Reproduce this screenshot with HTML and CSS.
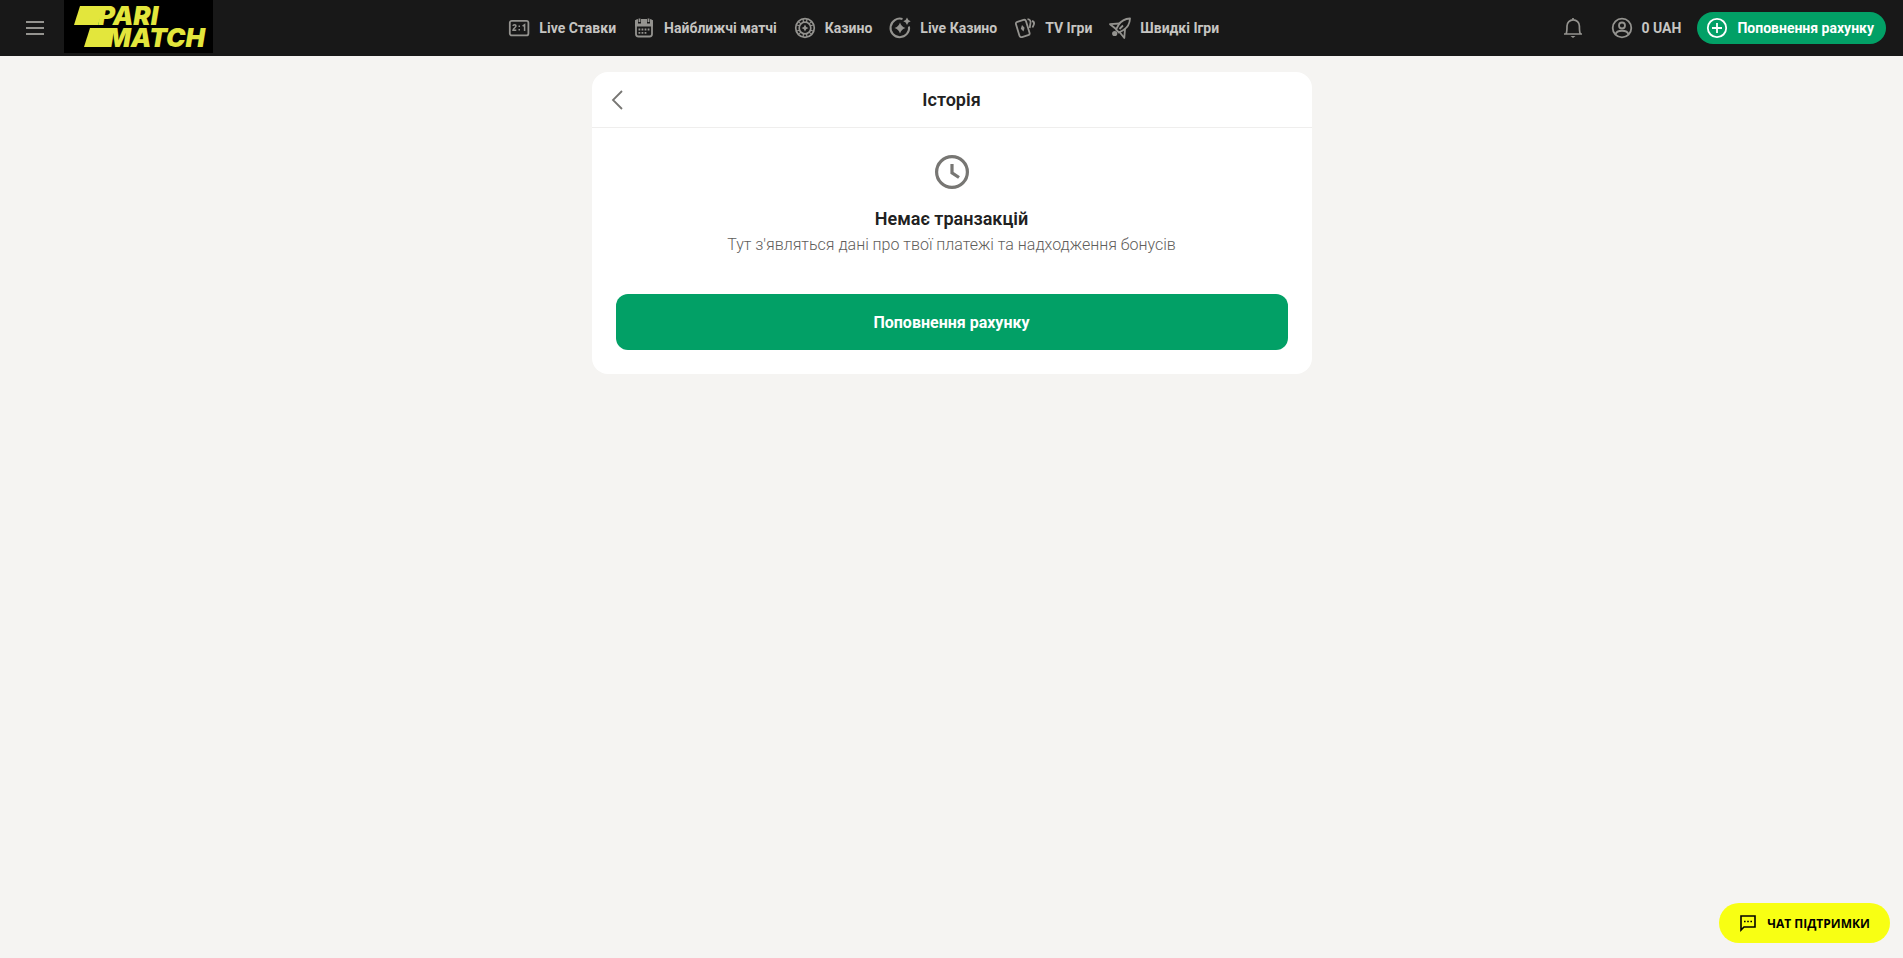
FILE: index.html
```html
<!DOCTYPE html>
<html lang="uk">
<head>
  <meta charset="UTF-8">
  <meta name="viewport" content="width=device-width, initial-scale=1.0">
  <title>Історія</title>
  <link rel="stylesheet" href="styles.css">
</head>
<body>

  <header class="header">
    <div class="header-left">
      <button class="icon-btn" type="button" aria-label="Меню">
        <svg width="24" height="24" viewBox="0 0 24 24" fill="none" stroke="currentColor" stroke-width="2">
          <path d="M3 6h18M3 12h18M3 18h18"/>
        </svg>
      </button>
      <a class="logo" href="#">
        <svg class="logo-shape" width="149" height="53" viewBox="0 0 149 53" fill="currentColor">
          <path d="M16 6H40L34 25H10z"/>
          <path d="M26 28H49L43 47H20z"/>
        </svg>
        PARI MATCH
      </a>
    </div>

    <nav class="nav">
      <a href="#">
        <svg width="24" height="24" viewBox="0 0 24 24" fill="none" stroke="currentColor" stroke-width="1.8">
          <rect x="2.8" y="4.8" width="18.6" height="14.6" rx="2"/>
          <path d="M6 10c.2-1.600 3-1.600 3 0 0 1.400-2.800 2.200-3 4.300h3.300M15.600 10.200l2-1.500v6.200" stroke-width="1.500"/>
          <path d="M11.500 9.500h1.500v1.500h-1.500zM11.500 13h1.500v1.500h-1.500z" fill="currentColor" stroke="none"/>
        </svg>
        Live Ставки
      </a>
      <a href="#">
        <svg width="24" height="24" viewBox="0 0 24 24" fill="none" stroke="currentColor" stroke-width="1.8">
          <rect x="4" y="4" width="16" height="16.500" rx="2.500"/>
          <path d="M4 5h16v4.500H4z" fill="currentColor"/>
          <path d="M7.500 2v5.500M16.500 2v5.500" stroke="#181818" stroke-width="3"/>
          <path d="M7.500 2.500v3.500M16.500 2.500v3.500"/>
          <path d="M6.500 13.500h11M6.500 16.800h8.500" stroke-dasharray="1.800 1.250" stroke-width="1.800"/>
        </svg>
        Найближчі матчі
      </a>
      <a href="#">
        <svg width="24" height="24" viewBox="0 0 24 24" fill="none" stroke="currentColor" stroke-width="1.7">
          <circle cx="12" cy="12" r="9.300"/>
          <circle cx="12" cy="12" r="5.800"/>
          <path d="M10 3l.5 3.400M14 3l-.5 3.400M10 21l.5-3.400M14 21l-.5-3.400M3.300 8.800l3.600 1.200M5.200 5.600l2.900 2.300M20.700 8.800l-3.600 1.200M18.800 5.600l-2.900 2.300M3.300 15.200l3.600-1.200M5.200 18.400l2.900-2.300M20.700 15.200l-3.600-1.200M18.800 18.400l-2.900-2.300" stroke-width="1.200"/>
          <path d="M12 8.500q.6 2.900 3.500 3.500-2.900.6-3.500 3.500-.6-2.900-3.500-3.500 2.900-.6 3.500-3.500z" fill="currentColor" stroke="none"/>
        </svg>
        Казино
      </a>
      <a href="#">
        <svg width="24" height="24" viewBox="0 0 24 24" fill="none" stroke="currentColor" stroke-width="2">
          <path d="M14.500 3A9.300 9.300 0 1 0 21 10.500"/>
          <path d="M12 6.500q1.400 4.100 5.500 5.500-4.100 1.400-5.500 5.500-1.400-4.100-5.500-5.500 4.100-1.400 5.500-5.500z" fill="currentColor" stroke="none"/>
          <path d="M19 1.500q.8 2.900 3.700 3.700-2.900.8-3.700 3.700-.8-2.900-3.700-3.700 2.900-.8 3.700-3.700z" fill="currentColor" stroke="none"/>
        </svg>
        Live Казино
      </a>
      <a href="#">
        <svg width="24" height="24" viewBox="0 0 24 24" fill="none" stroke="currentColor" stroke-width="1.8">
          <rect x="4.500" y="4.500" width="10.500" height="16" rx="2" transform="rotate(-17 9.750 12.500)"/>
          <path d="M9 9l2.600 2.700-1.100 3.800-2.700-2.700z" fill="currentColor" stroke="none"/>
          <path d="M14.500 3.200q3.400.3 3 3.500l-.8 5.300M19 4.800q2.800 1 1.900 3.600l-1.400 3.100"/>
        </svg>
        TV Ігри
      </a>
      <a href="#">
        <svg width="24" height="24" viewBox="0 0 24 24" fill="none" stroke="currentColor" stroke-width="1.8" stroke-linejoin="round">
          <path d="M22 2.500c-5 .2-9 2.500-11.500 6.500L8 13.500l3 3 4.500-2.500c4-2.500 6.300-6.500 6.500-11.500z"/>
          <path d="M11.500 7.500L2 8.200l6 4.800M17 13l-.7 9-4.800-6M15 9.500l-3.500 3.500"/>
          <circle cx="6.700" cy="17.500" r="2.600" fill="currentColor" stroke="none"/>
        </svg>
        Швидкі Ігри
      </a>
    </nav>

    <div class="header-right">
      <button class="icon-btn" type="button" aria-label="Сповіщення">
        <svg width="24" height="24" viewBox="0 0 24 24" fill="none" stroke="currentColor" stroke-width="1.7">
          <path d="M3 18h18M5 18c1-1.500 1-3 1-8a6.200 6.200 0 0 1 12.400 0c0 5 0 6.500 1 8M12 2v2"/>
          <path d="M9.500 20h5l-2.500 2z" fill="currentColor" stroke="none"/>
        </svg>
      </button>
      <a class="balance" href="#">
        <svg width="24" height="24" viewBox="0 0 24 24" fill="none" stroke="currentColor" stroke-width="1.800">
          <circle cx="12" cy="12" r="9.300"/>
          <circle cx="12" cy="9.500" r="3"/>
          <path d="M5.500 18.500c1.200-5 11.800-5 13 0"/>
        </svg>
        0 UAH
      </a>
      <button class="deposit-btn" type="button">
        <svg width="24" height="24" viewBox="0 0 24 24" fill="none" stroke="currentColor" stroke-width="1.800">
          <circle cx="12" cy="12" r="9.200"/>
          <path d="M12 7v10M7 12h10"/>
        </svg>
        Поповнення рахунку
      </button>
    </div>
  </header>

  <main class="card">
    <div class="card-header">
      <button class="back-btn" type="button" aria-label="Назад">
        <svg width="24" height="24" viewBox="0 0 24 24" fill="none" stroke="currentColor" stroke-width="1.800">
          <path d="M16 3L7 12l9 9"/>
        </svg>
      </button>
      <h1>Історія</h1>
    </div>
    <div class="card-body">
      <svg class="clock" width="40" height="40" viewBox="0 0 40 40" fill="none" stroke="currentColor" stroke-width="3.200">
        <circle cx="20" cy="20" r="15.400"/>
        <path d="M20 12v8.800l7 4.700"/>
      </svg>
      <h2>Немає транзакцій</h2>
      <p>Тут з'являться дані про твої платежі та надходження бонусів</p>
      <button class="main-btn" type="button">Поповнення рахунку</button>
    </div>
  </main>

  <button class="chat-btn" type="button">
    <svg width="18" height="18" viewBox="0 0 18 18" fill="none" stroke="currentColor" stroke-width="1.600">
      <path d="M2 2h14v11H5l-3 3z"/>
      <path d="M5 7.500h8" stroke-dasharray="1.600 1.600"/>
    </svg>
    ЧАТ ПІДТРИМКИ
  </button>

</body>
</html>
```

FILE: styles.css
```css
* {
  margin: 0;
  padding: 0;
  box-sizing: border-box;
}

body {
  font-family: Roboto, 'Liberation Sans', sans-serif;
  background: #f5f4f2;
  color: #212121;
  min-height: 100vh;
}

button {
  font-family: inherit;
  background: none;
  border: none;
  color: inherit;
  cursor: pointer;
}

a {
  color: inherit;
  text-decoration: none;
}

svg {
  display: block;
  flex-shrink: 0;
}

.header {
  display: flex;
  justify-content: space-between;
  height: 56px;
  padding: 0 17px 0 16px;
  background: #181818;
  color: #c6c5c2;
  font-size: 14px;
  font-weight: 700;
  white-space: nowrap;
}

.header svg {
  color: #94938f;
}

.header-left {
  display: flex;
  align-items: flex-start;
  gap: 10px;
}

.icon-btn {
  display: flex;
  align-items: center;
  height: 56px;
  padding: 0 7px;
}

/* the two words wrap onto separate lines, the first one hangs to the left */
.logo {
  position: relative;
  width: 149px;
  height: 53px;
  padding: 5px 0 0 42px;
  background: #000;
  color: #e3e63c;
  font-family: Inter, Roboto, sans-serif;
  font-size: 26px;
  line-height: 22px;
  font-weight: 900;
  font-style: italic;
  text-indent: -8px;
  white-space: normal;
}

.header .logo-shape {
  position: absolute;
  top: 0;
  left: 0;
  color: #e3e63c;
}

.nav {
  display: flex;
  align-items: center;
  gap: 16px;
}

.nav a,
.balance {
  display: flex;
  align-items: center;
  gap: 8px;
}

.header-right {
  display: flex;
  align-items: center;
  gap: 16px;
  padding-left: 38px;
}

.header-right .icon-btn {
  padding: 0 9px;
}

.deposit-btn {
  display: flex;
  align-items: center;
  gap: 8px;
  height: 32px;
  padding: 0 12px 0 8px;
  border-radius: 16px;
  background: #02a066;
  color: #fff;
  font-size: 14px;
  font-weight: 700;
}

.deposit-btn svg {
  color: #fff;
}

.card {
  max-width: 720px;
  margin: 16px auto 0;
  border-radius: 16px;
  background: #fff;
  text-align: center;
}

.card-header {
  display: grid;
  grid-template-columns: 24px 1fr 24px;
  align-items: center;
  height: 56px;
  padding: 0 14px;
  border-bottom: 1px solid #efeeed;
}

.back-btn {
  color: #777673;
}

.card h1 {
  font-size: 18px;
  line-height: 24px;
  font-weight: 600;
}

.card-body {
  display: flex;
  flex-direction: column;
  align-items: center;
  padding: 24px;
}

.clock {
  color: #777673;
}

.card h2 {
  margin-top: 15px;
  font-size: 18px;
  line-height: 24px;
  font-weight: 600;
}

.card p {
  margin-bottom: 35px;
  font-size: 16px;
  line-height: 28px;
  font-weight: 300;
  color: #5f5e5b;
}

.main-btn {
  width: 100%;
  height: 56px;
  border-radius: 12px;
  background: #02a066;
  color: #fff;
  font-size: 16px;
  font-weight: 700;
}

.chat-btn {
  position: fixed;
  right: 13px;
  bottom: 15px;
  display: flex;
  align-items: center;
  gap: 10px;
  height: 40px;
  padding: 0 20px;
  border-radius: 20px;
  background: #f8ff13;
  color: #000;
  font-family: 'Open Sans', 'Noto Sans', sans-serif;
  font-size: 12px;
  font-weight: 700;
}
```
